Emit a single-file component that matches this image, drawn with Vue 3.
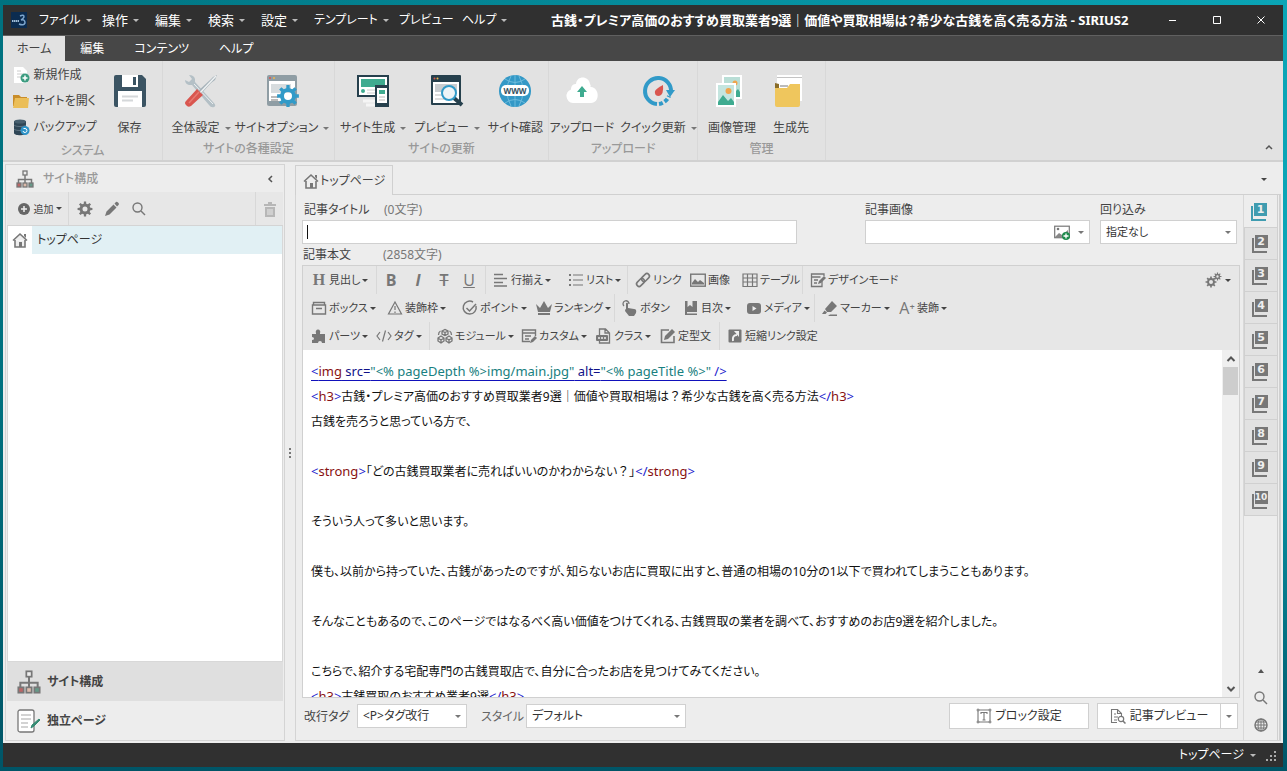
<script setup>
import { ref } from 'vue'

const toothed = (cx, cy, outer, inner, teeth) => {
  const step = (Math.PI * 2) / teeth
  const points = []
  for (let i = 0; i < teeth; i++) {
    const a = i * step
    const at = (r, o) => (cx + r * Math.cos(a + o * step)).toFixed(2) + ' ' + (cy + r * Math.sin(a + o * step)).toFixed(2)
    points.push(at(inner, -0.28), at(outer, -0.19), at(outer, 0.19), at(inner, 0.28))
  }
  return 'M' + points.join('L') + 'Z'
}
const ring = (cx, cy, r) => `M${cx - r} ${cy}a${r} ${r} 0 1 0 ${2 * r} 0a${r} ${r} 0 1 0 ${-2 * r} 0Z`
const gear = (cx, cy, outer, inner, hole, teeth, fill) =>
  `<path fill-rule="evenodd" fill="${fill}" d="${toothed(cx, cy, outer, inner, teeth)}${ring(cx, cy, hole)}"/>`

const G = '#777'
const line = (d, w = 1.4) => `<path d="${d}" fill="none" stroke="${G}" stroke-width="${w}"/>`
const solid = (d) => `<path d="${d}" fill="${G}" fill-rule="evenodd"/>`

const icons = {
  newDoc: '<path d="M1 0h9l4 4v12H1z" fill="#fff"/><path d="M4 4h4M4 7h7M4 10h5" stroke="#ccc"/><circle cx="12" cy="11" r="4.5" fill="#3c9c80"/><path d="M12 8.500v5M9.500 11h5" stroke="#fff" stroke-width="1.500"/>',
  openFolder: '<path d="M0 2h6l2 2h6v9H0z" fill="#c98d2a"/><path d="M2 5h14l-1 10H0z" fill="#ebbe58"/>',
  backup: '<path d="M1 2v12c0 3 12 3 12 0V2z" fill="#2f4656"/><ellipse cx="7" cy="2.500" rx="6" ry="2" fill="#48606f"/><path d="M1 6c1 2 11 2 12 0M1 10c1 2 11 2 12 0" stroke="#607482" fill="none"/><circle cx="12" cy="11.500" r="4.500" fill="#2d93c8"/><path d="M10 12a2 2 0 1 0 2-2.500h-1.500" stroke="#fff" fill="none"/>',
  save: '<path d="M2 0h26l4 4v26a2 2 0 0 1-2 2H2a2 2 0 0 1-2-2V2a2 2 0 0 1 2-2z" fill="#3b5463"/><path d="M8 0h16v12H8zM4 16h24v16H4z" fill="#fff"/><path d="M19 2h3v8h-3z" fill="#3b5463"/><path d="M8 21.500h16M8 25.500h11" stroke="#d5d8da" stroke-width="2"/>',
  tools: '<path d="M4 0q5 0 6 4v3l18 20q4 4 1 5-3 1-5-2L7 10H4Q0 9 0 5l4 2 3-3z" fill="#b4c0c6"/><path d="M9 9l19 20" stroke="#edf0f1"/><path d="M32 0l-2 5-4 3-11 12-3-3L25 5l3-3z" fill="#a7b3ba"/><path d="M31 1L14 19" stroke="#eef1f2" stroke-width="1.500"/><path d="M12 14l6 6L6 31q-3 2-5-1-2-2 0-4z" fill="#d9564f"/><path d="M14 17L4 28" stroke="#e77a72" stroke-width="1.500"/>',
  siteOption: '<rect x="1" width="30" height="31" rx="2" fill="#8f9da4"/><path d="M3 6h26v20H3z" fill="#fff"/><path d="M5 9h20v9H5z" fill="#d7dcde"/><path d="M5 22h7M5 25h7" stroke="#bbb" stroke-width="2"/><circle cx="4" cy="3" r="1" fill="#d9564f"/><circle cx="8" cy="3" r="1" fill="#efb74e"/>' + gear(22, 21, 11, 8, 4, 8, '#319ac8'),
  generate: '<path d="M0 0h32v22H0z" fill="#26404d"/><path d="M2 2h28v18H2z" fill="#fff"/><path d="M4 4h24v8H4z" fill="#3fab90"/><circle cx="6" cy="16" r="2" fill="#3fab90"/><path d="M10 15h8M10 18h8" stroke="#ccc"/><path d="M6 26h13M9 30h12" stroke="#f5f5f5" stroke-width="3"/><path d="M18 10h14v22H18z" fill="#26404d"/><path d="M20 13h10v15H20z" fill="#fff"/><path d="M22 15h6v4h-6z" fill="#3fab90"/><path d="M22 22h6M22 25h6" stroke="#bbb"/>',
  preview: '<rect width="30" height="30" rx="1" fill="#26404d"/><path d="M2 7h26v21H2z" fill="#fff"/><path d="M4 9h22v8H4z" fill="#c9cdd0"/><path d="M4 20h8M4 24h12" stroke="#bbb"/><circle cx="3.500" cy="3.500" r="1" fill="#d9564f"/><circle cx="6.500" cy="3.500" r="1" fill="#efb74e"/><path d="M23 23l8 7" stroke="#26404d" stroke-width="4"/><circle cx="18" cy="18" r="7" fill="#eef4f7" stroke="#319ac8" stroke-width="2"/>',
  www: '<circle cx="16" cy="16" r="16" fill="#3398c6"/><path d="M16 0v32M6 4q10 7 20 0M6 28q10-7 20 0M12 1q-8 15 0 30M20 1q8 15 0 30" stroke="#6dbbdc" fill="none"/><rect x="2" y="10" width="28" height="11" rx="5" fill="#fff"/><text x="16" y="19" font-size="8" font-weight="bold" text-anchor="middle" fill="#34515f">WWW</text>',
  upload: '<path d="M7 28a7 7 0 0 1-2-13.500C5 10 8 9 10 9c1-9 13-8 14 0 2 3-1 3 1 3 9 1 9 16 0 16z" fill="#fff"/><path d="M16 11l5 6h-3v5h-4v-5h-3z" fill="#3fab90"/>',
  quick: '<path d="M15 29A13 13 0 1 1 29 17" fill="none" stroke="#319ac8" stroke-width="4"/><path d="M17 29A13 13 0 0 0 27 21" fill="none" stroke="#319ac8" stroke-width="4" stroke-dasharray="4 2"/><path d="M24 15h9l-5 7z" fill="#319ac8"/><path d="M21 10q1 10-4 11-5 0-4-5 2-3 8-6z" fill="#d9564f"/>',
  images: '<path d="M6 0h20v24H6z" fill="#fff"/><path d="M8 2h16v20H8z" fill="#b9ded6"/><circle cx="19" cy="8" r="2.500" fill="#efa54e"/><path d="M19 17l3-3 2 3v5h-5z" fill="#3fab90"/><path d="M0 8h20v24H0z" fill="#fff"/><path d="M2 10h16v20H2z" fill="#c4e5df"/><circle cx="12.500" cy="16" r="3" fill="#efa54e"/><path d="M2 27l5-7 5 6 3-3 3 4v3H2z" fill="#3fab90"/>',
  folder: '<path d="M2 0h25v26H2z" fill="#fff"/><path d="M2 2.500h25" stroke="#c4c4c4"/><path d="M0 8l4 1v4H0z" fill="#8a6d2a"/><path d="M0 13h12l3-4h10v21q0 2-2 2H2q-2 0-2-2z" fill="#efc65d"/><path d="M5 11h8" stroke="#bbb" stroke-width="2"/>',
  sitemap: line('M9 4v10M2.500 14v-4.500h13V14', 1.500) + '<rect x="7" y="1" width="4" height="4" fill="#eee" stroke="#777" stroke-width="1.300"/><rect x="1" y="13" width="4" height="4" fill="#b66" stroke="#777" stroke-width="1.300"/><rect x="7" y="13" width="4" height="4" fill="#dba" stroke="#777" stroke-width="1.300"/><rect x="13" y="13" width="4" height="4" fill="#698" stroke="#777" stroke-width="1.300"/>',
  page: '<rect x="1" y="1" width="16" height="22" rx="2" fill="#fff" stroke="#777" stroke-width="1.300"/><path d="M4 6h10M4 10h10M4 14h7M4 18h7" stroke="#c5c5c5" stroke-width="1.400"/><path d="M14 19l1-3 7-6 1 1-6 6z" fill="#358b73" stroke="#358b73"/>',
  plus: '<circle cx="8" cy="8" r="6" fill="#666"/><path d="M8 5v6M5 8h6" stroke="#eee" stroke-width="1.500"/>',
  gear: gear(8, 8, 7.5, 5.5, 2.5, 8, G),
  pencil: solid('M1 15l1.500-4.500 7-7 3 3-7 7zM10.500 2.500l1.500-1.500q1-.5 2 .5l.5.500q1 1 0 2L13 5.500z'),
  search: '<circle cx="6.500" cy="6.500" r="4.500" fill="none" stroke="#777" stroke-width="1.400"/><path d="M10 10l4 4" stroke="#777" stroke-width="1.500"/>',
  trash: '<path d="M2 3h12v2H2zM6 1h4v2H6zM3 6h10v10H3z" fill="#b7b7b7"/><path d="M6 8v6M8 8v6M10 8v6" stroke="#e8e8e8"/>',
  home: '<path d="M1 8.500L8 2l7 6.500M3 8v7h10V8" fill="#eee" stroke="#777" stroke-width="1.600"/><path d="M12 2h2v4l-2-2zM7 10h3v5H7z" fill="#777"/>',
  align: line('M1 2.500h9M1 6.500h13M1 10.500h9M1 14h13', 1.3),
  list: solid('M1 2h2v2H1zM1 7h2v2H1zM1 12h2v2H1z') + line('M5 3h10M5 8h10M5 13h10', 1.2),
  link: '<g transform="rotate(-45 8 8)" fill="none" stroke="#777" stroke-width="1.600"><rect x="0" y="5.500" width="9" height="5" rx="2.500"/><rect x="7" y="5.500" width="9" height="5" rx="2.500"/></g>',
  image: '<rect x=".7" y="2.200" width="14.600" height="12" fill="none" stroke="#777" stroke-width="1.400"/>' + solid('M2 12.500V11l3-4 3 3 2-2 4 3v1.500z'),
  table: line('M1 2h14v12.500H1zM1 6h14M1 10h14M5.500 2v12.500M10.500 2v12.500', 1.2),
  design: line('M12 9v5.500H1.500V2H14v2M1.500 5h9M4 8h4M4 11h3', 1.3) + solid('M8 12l1-3 5-5 2 2-5 5z'),
  box: line('M1.500 5h13v9h-13zM2.500 5V2.500h11V5M5 8.500h6', 1.4),
  warn: line('M8 2l6.500 12h-13zM8 6v4M8 11.500v1.500', 1.2),
  check: line('M14 6A6.500 6.500 0 1 1 11 2M4.500 8l3 3L14 4', 1.5),
  crown: solid('M0 4l4 4 4-7 4 7 4-4-2 8H2zM2 13h12v2H2z'),
  hand: solid('M4 3q2-1 2 1v4l6 1q3 0 2 4l-2 3H7L3 11q0-2 1-2z') + line('M2 6a3 3 0 1 1 5-2', 1.3),
  book: solid('M2 1h2.500v6L7 5l2.500 2V1H14v11H4v1.500h10V15H2z'),
  media: '<rect x="1" y="3" width="14" height="11" rx="3" fill="#777"/><path d="M6.500 6v5l4-2.500z" fill="#eee"/>',
  marker: solid('M10 1l5 5-6 6H5L3 9zM2.500 10.500l2.500 2L3.500 14H0zM8 14.500h7V16H6z'),
  puzzle: solid('M1 6h4V5a2.300 2.300 0 1 1 4 0v1h5v9h-3q0-2-2-2t-2 2H1v-3q2 0 2-1.500T1 9z'),
  code: line('M4 4L1 8l3 4M12 4l3 4-3 4M9.500 2.500l-3 11', 1.2),
  modules: '<g fill="none" stroke="#777" stroke-width="1.300"><path d="M5 3l3-1.500L11 3v3L8 7.500 5 6zM5 3l3 1.500L11 3M8 4.500v3M1 10l3-2 3 2v3l-3 2-3-2zM9 10l3-2 3 2v3l-3 2-3-2zM1 10l3 2 3-2M9 10l3 2 3-2M4 12v3M12 12v3M1.500 7q0-3 2-4M12.500 3q2 1 2 4"/></g>',
  custom: line('M9 13.500H1.500V2h13v6M1.500 5h13M4 8h6M4 11h4', 1.4) + solid('M9 15l1-3 4-4 2 2-4 4z'),
  classDoc: line('M3.500 7V1h6l4 4v10H3.500v-2M9 1v4h4', 1.3) + '<rect x="0" y="7" width="12" height="6" rx="1" fill="#777"/><path d="M2 10h2M5 10h2M8 10h2" stroke="#eee" stroke-width="1.500"/>',
  edit: line('M14 8v6.500H1.500V2H9', 1.6) + solid('M4 12l1-4 7-7 3 3-7 7z'),
  shortcut: '<rect x="1.500" y="1.500" width="13" height="13" rx="1" fill="#777"/><path d="M6 13q-1-6 4-6" stroke="#eee" stroke-width="2" fill="none"/><path d="M7 3h5v6z" fill="#eee"/>',
  gears: gear(6, 10, 5.5, 4, 2, 8, G) + gear(12.5, 4.5, 4, 2.7, 1.2, 8, G),
  imageAdd: '<rect x=".7" y="2.200" width="14.600" height="11.500" fill="none" stroke="#777" stroke-width="1.200"/><circle cx="4" cy="5" r="1.300" fill="#777"/><path d="M1 13l4-4 3 2 6-5v7z" fill="#888"/><circle cx="12" cy="12" r="4" fill="#1e8a4c"/><path d="M12 9.500v5M9.500 12h5" stroke="#fff" stroke-width="1.300"/>',
  blockText: line('M2 2h12v12H2zM5 6V4.500h6V6M8 4.500V12M6.500 12h3', 1.1) + '<g fill="#eee" stroke="#777"><circle cx="2" cy="2" r="1"/><circle cx="14" cy="2" r="1"/><circle cx="2" cy="14" r="1"/><circle cx="14" cy="14" r="1"/></g>',
  docSearch: line('M7 14.500H1.500V1.500h6l4 4V8M7.500 1.500v4h4M4 6h2M4 9h4M4 12h3', 1.1) + '<circle cx="11" cy="11" r="2.700" fill="#fff" stroke="#777" stroke-width="1.200"/><path d="M13 13l2.500 2.500" stroke="#777" stroke-width="1.500"/>',
  globe: '<circle cx="8" cy="8" r="6" fill="none" stroke="#777" stroke-width="1.500"/><ellipse cx="8" cy="8" rx="3" ry="6" fill="none" stroke="#777"/><path d="M8 2v12M2 8h12M3 5h10M3 11h10" stroke="#777"/>',
}

const menus = [
  { t: 'ファイル', c: true }, { t: '操作', c: true }, { t: '編集', c: true }, { t: '検索', c: true },
  { t: '設定', c: true }, { t: 'テンプレート', c: true }, { t: 'プレビュー' }, { t: 'ヘルプ', c: true },
]
const ribbonTabs = ['ホーム', '編集', 'コンテンツ', 'ヘルプ']
const activeRibbon = ref('ホーム')
const systemItems = [
  { t: '新規作成', i: 'newDoc' }, { t: 'サイトを開く', i: 'openFolder' }, { t: 'バックアップ', i: 'backup' },
]
const ribbonGroups = [
  { name: 'サイトの各種設定', k: 'settings', items: [{ t: '全体設定', i: 'tools', c: true }, { t: 'サイトオプション', i: 'siteOption', c: true }] },
  { name: 'サイトの更新', k: 'update', items: [{ t: 'サイト生成', i: 'generate', c: true }, { t: 'プレビュー', i: 'preview', c: true }, { t: 'サイト確認', i: 'www' }] },
  { name: 'アップロード', k: 'upload', items: [{ t: 'アップロード', i: 'upload' }, { t: 'クイック更新', i: 'quick', c: true }] },
  { name: '管理', k: 'manage', items: [{ t: '画像管理', i: 'images' }, { t: '生成先', i: 'folder' }] },
]
const toolRows = [
  [
    { g: 'H', k: 'serif', t: '見出し', c: true },
    { g: 'B', k: 'bold', s: true }, { g: 'I', k: 'italic' }, { g: 'T', k: 'strike' }, { g: 'U', k: 'under' },
    { i: 'align', t: '行揃え', c: true, s: true }, { i: 'list', t: 'リスト', c: true },
    { i: 'link', t: 'リンク', s: true }, { i: 'image', t: '画像' }, { i: 'table', t: 'テーブル' },
    { i: 'design', t: 'デザインモード', s: true },
  ],
  [
    { i: 'box', t: 'ボックス', c: true }, { i: 'warn', t: '装飾枠', c: true }, { i: 'check', t: 'ポイント', c: true },
    { i: 'crown', t: 'ランキング', c: true }, { i: 'hand', t: 'ボタン', s: true }, { i: 'book', t: '目次', c: true },
    { i: 'media', t: 'メディア', c: true }, { i: 'marker', t: 'マーカー', c: true, s: true },
    { g: 'A⁺', k: 'letter', t: '装飾', c: true },
  ],
  [
    { i: 'puzzle', t: 'パーツ', c: true }, { i: 'code', t: 'タグ', c: true }, { i: 'modules', t: 'モジュール', c: true, s: true },
    { i: 'custom', t: 'カスタム', c: true }, { i: 'classDoc', t: 'クラス', c: true }, { i: 'edit', t: '定型文' },
    { i: 'shortcut', t: '短縮リンク設定', s: true },
  ],
]
const tag = (open, name) => [['p', open], ['n', name], ['p', '>']]
const body = [
  [['p', '<'], ['n', 'img'], ['a', ' src='], ['v', '"<% pageDepth %>img/main.jpg"'], ['a', ' alt='], ['v', '"<% pageTitle %>"'], ['p', ' />']],
  [...tag('<', 'h3'), ['t', '古銭・プレミア高価のおすすめ買取業者9選｜価値や買取相場は'], ['w', '？'], ['t', '希少な古銭を高く売る方法'], ...tag('</', 'h3')],
  [['t', '古銭を売ろうと思っている方で、']],
  [],
  [...tag('<', 'strong'), ['t', '「どの古銭買取業者に売ればいいのかわからない'], ['w', '？'], ['t', '」'], ...tag('</', 'strong')],
  [],
  [['t', 'そういう人って多いと思います。']],
  [],
  [['t', '僕も、以前から持っていた、古銭があったのですが、知らないお店に買取に出すと、普通の相場の10分の1以下で買われてしまうこともあります。']],
  [],
  [['t', 'そんなこともあるので、このページではなるべく高い価値をつけてくれる、古銭買取の業者を調べて、おすすめのお店9選を紹介しました。']],
  [],
  [['t', 'こちらで、紹介する宅配専門の古銭買取店で、自分に合ったお店を見つけてみてください。']],
  [...tag('<', 'h3'), ['t', '古銭買取のおすすめ業者9選'], ...tag('</', 'h3')],
]
const activePage = ref(1)
const title = ref('')
</script>

<template>
  <div class="desktop">
    <div class="window">
      <header class="titlebar">
        <svg class="logo" viewBox="0 0 16 16">
          <rect width="16" height="16" fill="#0b2c50" /><path d="M1 9h7" stroke="#9dbbd6" stroke-width="2" stroke-dasharray="1.500 .5" />
          <path d="M9 4q4-2 4 1-1 2-3 3 4-1 4 3-1 3-6 1" fill="none" stroke="#7ea6cc" stroke-width="1.500" />
        </svg>
        <nav class="menus">
          <button v-for="m in menus" :key="m.t" class="menu">{{ m.t }}<i v-if="m.c" class="caret" /></button>
        </nav>
        <h1>古銭・プレミア高価のおすすめ買取業者9選｜価値や買取相場は？希少な古銭を高く売る方法 - SIRIUS2</h1>
        <div class="controls">
          <button aria-label="最小化"><svg viewBox="0 0 10 10"><path d="M1 5.500h7" /></svg></button>
          <button aria-label="最大化"><svg viewBox="0 0 10 10"><path d="M1.500 1.500h7v7h-7z" /></svg></button>
          <button aria-label="閉じる"><svg viewBox="0 0 10 10"><path d="M1.500 1.500l7 7M8.500 1.500l-7 7" /></svg></button>
        </div>
      </header>

      <nav class="ribbon-tabs">
        <button v-for="t in ribbonTabs" :key="t" :class="{ active: t === activeRibbon }" @click="activeRibbon = t">{{ t }}</button>
      </nav>

      <section class="ribbon">
        <div class="group system">
          <div class="group-items">
            <div class="small-list">
              <button v-for="s in systemItems" :key="s.t"><svg class="ic16" viewBox="0 0 16 16" v-html="icons[s.i]" />{{ s.t }}</button>
            </div>
            <button class="large"><svg class="ic32" viewBox="0 0 32 32" v-html="icons.save" /><span>保存</span></button>
          </div>
          <div class="group-name">システム</div>
        </div>
        <div v-for="g in ribbonGroups" :key="g.name" class="group" :class="g.k">
          <div class="group-items">
            <button v-for="b in g.items" :key="b.t" class="large">
              <svg class="ic32" viewBox="0 0 32 32" v-html="icons[b.i]" />
              <span>{{ b.t }}<i v-if="b.c" class="caret" /></span>
            </button>
          </div>
          <div class="group-name">{{ g.name }}</div>
        </div>
        <button class="collapse" aria-label="リボンを折りたたむ"><svg viewBox="0 0 8 8"><path d="M1 6l3-3 3 3" /></svg></button>
      </section>

      <main class="content">
        <aside class="side">
          <div class="side-head">
            <svg class="ic18" viewBox="0 0 18 18" v-html="icons.sitemap" />
            <h2>サイト構成</h2>
            <button aria-label="閉じる"><svg viewBox="0 0 8 8"><path d="M6 1L3 4l3 3" /></svg></button>
          </div>
          <div class="side-tools">
            <button class="add"><svg class="ic16" viewBox="0 0 16 16" v-html="icons.plus" />追加<i class="caret dark" /></button>
            <button aria-label="設定"><svg class="ic16" viewBox="0 0 16 16" v-html="icons.gear" /></button>
            <button aria-label="編集"><svg class="ic16" viewBox="0 0 16 16" v-html="icons.pencil" /></button>
            <button aria-label="検索"><svg class="ic16" viewBox="0 0 16 16" v-html="icons.search" /></button>
            <button class="trash" aria-label="削除"><svg class="ic16" viewBox="0 0 16 16" v-html="icons.trash" /></button>
          </div>
          <div class="tree">
            <a href="#" class="node"><svg class="ic16" viewBox="0 0 16 16" v-html="icons.home" /><span>トップページ</span></a>
          </div>
          <button class="side-nav on"><svg class="ic24" viewBox="0 0 18 18" v-html="icons.sitemap" />サイト構成</button>
          <button class="side-nav"><svg class="ic24" viewBox="0 0 24 24" v-html="icons.page" />独立ページ</button>
        </aside>

        <div class="splitter"><i /><i /><i /></div>

        <section class="doc">
          <div class="doc-tabs">
            <button class="doc-tab"><svg class="ic16" viewBox="0 0 16 16" v-html="icons.home" />トップページ</button>
            <button class="tab-list" aria-label="タブ一覧"><i class="caret dark" /></button>
          </div>
          <div class="doc-body">
            <div class="form">
              <div class="fields">
                <div class="field grow">
                  <div class="labels"><label for="title">記事タイトル</label><span>(0文字)</span></div>
                  <div class="control typing"><input id="title" v-model="title" type="text" /></div>
                </div>
                <div class="field picture">
                  <label for="picture">記事画像</label>
                  <div class="control">
                    <input id="picture" type="text" />
                    <svg class="ic16" viewBox="0 0 16 16" v-html="icons.imageAdd" /><i class="caret" />
                  </div>
                </div>
                <div class="field wrap">
                  <label for="wrap">回り込み</label>
                  <div class="control small"><select id="wrap"><option>指定なし</option></select><i class="caret" /></div>
                </div>
              </div>
              <div class="labels body-label"><span id="body-label">記事本文</span><span>(2858文字)</span></div>

              <div class="editor">
                <div class="toolbar">
                  <div v-for="(row, r) in toolRows" :key="r" class="tools" :class="'row' + (r + 1)">
                    <button v-for="(b, n) in row" :key="n" :class="{ sep: b.s }">
                      <svg v-if="b.i" class="ic16" viewBox="0 0 16 16" v-html="icons[b.i]" />
                      <b v-else class="glyph" :class="b.k">{{ b.g }}</b>
                      <span v-if="b.t">{{ b.t }}</span><i v-if="b.c" class="caret dark" />
                    </button>
                    <button v-if="r === 0" class="config" aria-label="設定"><svg class="ic16" viewBox="0 0 16 16" v-html="icons.gears" /><i class="caret dark" /></button>
                  </div>
                </div>
                <div class="text-wrap">
                  <div class="text" contenteditable="true" role="textbox" aria-multiline="true" aria-labelledby="body-label" spellcheck="false">
                    <p v-for="(l, n) in body" :key="n" :class="{ current: n === 0 }"><span v-for="(s, m) in l" :key="m" :class="'tok-' + s[0]">{{ s[1] }}</span></p>
                  </div>
                  <div class="scroll">
                    <svg viewBox="0 0 10 10"><path d="M1.500 7L5 3.500 8.500 7" /></svg>
                    <i />
                    <svg class="down" viewBox="0 0 10 10"><path d="M1.500 3L5 6.500 8.500 3" /></svg>
                  </div>
                </div>
              </div>

              <div class="foot">
                <label for="br">改行タグ</label>
                <div class="control br"><select id="br"><option>&lt;P&gt;タグ改行</option></select><i class="caret" /></div>
                <label for="style" class="style-label">スタイル</label>
                <div class="control style"><select id="style"><option>デフォルト</option></select><i class="caret" /></div>
                <button class="push"><svg class="ic16" viewBox="0 0 16 16" v-html="icons.blockText" />ブロック設定</button>
                <div class="split">
                  <button><svg class="ic16" viewBox="0 0 16 16" v-html="icons.docSearch" />記事プレビュー</button>
                  <button class="more" aria-label="その他"><i class="caret" /></button>
                </div>
              </div>
            </div>

            <div class="pages">
              <button v-for="n in 10" :key="n" :class="{ on: n === activePage }" @click="activePage = n"><span class="stack">{{ n }}</span></button>
              <div class="page-tools">
                <button aria-label="上へ"><i class="caret up dark" /></button>
                <button aria-label="検索"><svg class="ic16" viewBox="0 0 16 16" v-html="icons.search" /></button>
                <button aria-label="ブラウザ"><svg class="ic16" viewBox="0 0 16 16" v-html="icons.globe" /></button>
              </div>
            </div>
          </div>
        </section>
      </main>

      <footer class="status">
        <button>トップページ<i class="caret" /></button>
        <svg class="grip" viewBox="0 0 12 12"><path d="M8 0h2v2H8zM4 4h2v2H4zM8 4h2v2H8zM0 8h2v2H0zM4 8h2v2H4zM8 8h2v2H8z" /></svg>
      </footer>
    </div>
  </div>
</template>

<style>
body { margin: 0; overflow: hidden; }
</style>

<style scoped>
* { box-sizing: border-box; }
.desktop {
  height: 100vh; padding: 5px 4px 4px 3px;
  background: linear-gradient(180deg, transparent 50%, #005567 100%), linear-gradient(90deg, #007280, #0aa5b6);
  font: 12px/16px "Noto Sans", "Noto Sans CJK JP", sans-serif;
  font-feature-settings: "palt";
  color: #444;
}
button, input, select { font: inherit; font-feature-settings: inherit; color: inherit; border: 0; margin: 0; padding: 0; background: none; border-radius: 0; white-space: nowrap; }
button { display: flex; align-items: center; }
h1, h2, p { margin: 0; }
svg { display: block; flex: none; overflow: visible; }
.ic16 { width: 16px; height: 16px; }
.ic18 { width: 18px; height: 18px; }
.ic24 { width: 24px; height: 24px; }
.ic32 { width: 32px; height: 32px; }
.caret { flex: none; width: 0; height: 0; border: 3px solid transparent; border-top-color: #777; border-bottom: 0; }
.caret.dark { border-top-color: #444; }
.caret.up { border-top: 0; border-bottom: 4px solid #555; }

.window { height: 100%; display: flex; flex-direction: column; background: #ededed; }

.titlebar { flex: none; height: 31px; display: flex; align-items: center; background: #303030; border-bottom: 1px solid #606060; color: #fff; font-size: 13px; }
.logo { width: 16px; height: 16px; margin: 0 12px 0 8px; }
.menus { display: grid; grid-template-columns: 63px 53px 53px 53px 53px 85px 63px 89px; }
.menu { gap: 5px; }
.menu:nth-child(1), .menu:nth-child(n + 6) { font-size: 12px; }
.menu .caret { border-top-color: #bbb; }
h1 { flex: 1; min-width: 0; font-size: 13px; font-weight: bold; white-space: nowrap; overflow: hidden; }
.controls { display: flex; }
.controls button { width: 44px; justify-content: center; }
.controls svg { width: 10px; height: 10px; fill: none; stroke: #fff; }

.ribbon-tabs { flex: none; height: 25px; display: flex; background: #474747; color: #fff; }
.ribbon-tabs button { padding: 0 15px; }
.ribbon-tabs button:first-child { padding: 0 14px; }
.ribbon-tabs .active { background: #e2e2e2; color: #444; }

.ribbon { flex: none; height: 101px; display: flex; background: #e2e2e2; border-bottom: 2px solid #d1d1d1; }
.group { display: flex; flex-direction: column; border-right: 1px solid #d8d8d8; }
.group-items { display: flex; flex: 1; justify-content: center; }
.group-name { height: 22px; line-height: 22px; text-align: center; font-size: 12px; font-weight: 500; color: #999; }
.system { width: 160px; }
.settings { width: 172px; }
.update { width: 214px; }
.upload { width: 149px; }
.manage { width: 128px; }
.small-list { width: 94px; padding-top: 1px; }
.small-list button { height: 26px; gap: 5px; padding-left: 8px; }
.large { flex-direction: column; justify-content: flex-start; padding: 14px 4px 0; gap: 13px; }
.large span { display: flex; align-items: center; gap: 5px; }
.system .large { width: 62px; }
.settings .group-items { padding-left: 4px; }
.settings .large { padding: 14px 2px 0; }
.upload .large { padding: 14px 3px 0; }
.manage .large { width: 59px; }
.collapse { margin-left: auto; align-self: flex-end; padding: 0 10px 9px; }
.collapse svg, .side-head button svg { width: 8px; height: 8px; fill: none; stroke: #555; stroke-width: 1.500; }

.content { flex: 1; min-height: 0; display: flex; padding: 2px 1px 2px 2px; }
.side { width: 280px; flex: none; display: flex; flex-direction: column; border: 1px solid #d4d4d4; padding: 0 1px; }
.side-head { height: 27px; display: flex; align-items: center; gap: 9px; padding: 0 9px; }
.side-head h2 { flex: 1; font-size: 12px; font-weight: 500; color: #999; }
.side-tools { height: 34px; display: flex; align-items: center; background: #e7e7e7; padding-left: 6px; border-bottom: 1px solid #d4d4d4; }
.side-tools button { width: 27px; height: 33px; justify-content: center; }
.side-tools .add { width: 56px; gap: 2px; font-size: 10px; margin-right: 2px; padding-right: 4px; border-right: 1px solid #d8d8d8; }
.side-tools .trash { margin-left: auto; border-left: 1px solid #d8d8d8; width: 28px; }
.tree { flex: 1; background: #fff; border: 1px solid #d8d8d8; border-top: 0; }
.node { display: flex; align-items: center; gap: 4px; height: 28px; padding-left: 4px; text-decoration: none; color: #333; }
.node span { flex: 1; height: 28px; line-height: 28px; padding-left: 5px; background: #e1f0f4; }
.side-nav { height: 39px; gap: 6px; padding-left: 10px; font-size: 12px; font-weight: bold; }
.side-nav.on { background: #dfdfdf; }

.splitter { width: 10px; flex: none; display: flex; flex-direction: column; align-items: center; justify-content: center; gap: 2px; }
.splitter i { width: 2px; height: 2px; background: #777; }

.doc { flex: 1; min-width: 0; display: flex; flex-direction: column; padding: 1px 1px 0 0; }
.doc-tabs { height: 30px; flex: none; display: flex; align-items: stretch; border-bottom: 1px solid #d0d0d0; }
.doc-tab { gap: 1px; padding: 0 7px; margin-bottom: -1px; border: 1px solid #d0d0d0; border-bottom: 0; background: #ededed; }
.tab-list { margin-left: auto; padding: 0 14px; }
.doc-body { flex: 1; min-height: 0; display: flex; border: 1px solid #d4d4d4; border-top: 0; }
.form { flex: 1; min-width: 0; display: flex; flex-direction: column; padding: 7px 3px 0 6px; }
.fields { display: flex; gap: 10px; padding-right: 3px; }
.field { display: flex; flex-direction: column; }
.field.grow { flex: 1; margin-right: 58px; }
.picture { width: 225px; }
.wrap { width: 137px; }
.field > label { height: 18px; line-height: 16px; }
.labels { height: 18px; display: flex; gap: 14px; padding-left: 2px; }
.labels > * + * { color: #777; }
.labels > :first-child { min-width: 66px; }
.body-label { height: 21px; padding: 3px 0 0 1px; }
.control { position: relative; display: flex; align-items: center; height: 24px; border: 1px solid #d0d0d0; background: #fff; color: #333; }
.control input, .control select { flex: 1; min-width: 0; height: 22px; appearance: none; padding: 0 5px; outline: 0; }
.control > .caret { position: absolute; right: 5px; pointer-events: none; }
.typing::before { content: ""; position: absolute; left: 4px; width: 1px; height: 14px; background: #111; }
.picture .ic16 { margin-right: 19px; }
.small { font-size: 11px; }

.editor { flex: 1; min-height: 0; display: flex; flex-direction: column; border: 1px solid #d0d0d0; }
.toolbar { flex: none; background: #e7e7e7; font-size: 11px; }
.tools { display: grid; height: 28px; padding-left: 2px; }
.row1 { grid-template-columns: 71px 29px 26px 25px 29px 77px 65px 57px 52px 66px 1fr auto; }
.row2 { grid-template-columns: 76px 75px 74px 84px 63px 63px 74px 79px 1fr; }
.row3 { grid-template-columns: 65px 59px 86px 75px 64px 65px 1fr; }
.tools button { gap: 2px; padding-left: 6px; }
.tools .sep { border-left: 1px solid #d8d8d8; padding-left: 7px; }
.tools .config { gap: 4px; padding-right: 8px; }
.glyph { width: 14px; font: bold 16px/16px "Open Sans", sans-serif; color: #777; text-align: center; }
.serif { width: 16px; font-family: "Liberation Serif", serif; }
.italic { font-style: italic; }
.strike { text-decoration: line-through; font-weight: 600; }
.under { font-weight: normal; text-decoration: underline; }
.letter { width: 16px; font-weight: normal; }
.text-wrap { flex: 1; min-height: 0; display: flex; background: #fff; overflow: hidden; }
.text { flex: 1; min-width: 0; padding: 9px 8px 0; font-size: 12px; line-height: 25px; color: #111; overflow: hidden; outline: 0; }
.text p { height: 25px; white-space: pre; }
.current { text-decoration: underline; text-underline-offset: 4px; text-decoration-color: #11b; }
.tok-p, .tok-n, .tok-a, .tok-v { font-size: 13px; }
.tok-w { font-feature-settings: normal; }
.tok-p { color: #22c; }
.tok-n { color: #811; }
.tok-a { color: #118; }
.tok-v { color: #188080; }
.scroll { width: 17px; flex: none; display: flex; flex-direction: column; align-items: center; background: #efefef; padding: 4px 1px 3px; }
.scroll svg { width: 10px; height: 10px; fill: none; stroke: #555; stroke-width: 2; }
.scroll i { width: 15px; height: 28px; background: #cdcdcd; margin-top: 3px; }
.scroll .down { margin-top: auto; }

.foot { flex: none; height: 42px; display: flex; align-items: flex-start; padding: 6px 2px 0 2px; }
.foot label { line-height: 26px; width: 53px; white-space: nowrap; }
.foot .style-label { width: 45px; margin-left: 14px; color: #666; }
.br { width: 110px; }
.style { width: 160px; }
.push, .split button { height: 26px; justify-content: center; gap: 3px; background: #fff; border: 1px solid #d0d0d0; color: #333; }
.push { width: 140px; margin: -1px 8px 0 auto; }
.split { display: flex; margin-top: -1px; }
.split button { width: 124px; gap: 4px; }
.split .more { width: 17px; border-left: 0; }

.pages { width: 37px; flex: none; display: flex; flex-direction: column; align-items: flex-start; border-left: 1px solid #d8d8d8; border-right: 3px double #d0d0d0; }
.pages > button { width: 34px; height: 32px; justify-content: center; border: 1px solid #d0d0d0; border-top: 0; background: #e2e2e2; }
.pages > button.on { height: 33px; background: #ededed; border-left: 0; color: #3f9cb0; }
.pages > button { color: #777; }
.stack { position: relative; width: 13px; height: 13px; background: currentColor; margin: 0 0 4px; font: bold 11px/13px "DejaVu Sans", sans-serif; text-align: center; -webkit-text-fill-color: #eee; }
.stack::before { content: ""; position: absolute; left: -3px; top: 3px; width: 13px; height: 13px; border: solid currentColor; border-width: 0 0 2px 2px; }
.pages > button:nth-child(10) .stack { font-size: 9px; }
.page-tools { margin-top: auto; width: 34px; padding-bottom: 2px; }
.page-tools button { width: 34px; height: 27px; justify-content: center; }

.status { flex: none; height: 24px; display: flex; align-items: center; justify-content: flex-end; gap: 10px; padding-right: 5px; background: #303030; color: #fff; }
.status button { gap: 6px; }
.status .caret { border-top-color: #bbb; }
.grip { width: 12px; height: 12px; fill: #aaa; margin-top: 4px; }
</style>
